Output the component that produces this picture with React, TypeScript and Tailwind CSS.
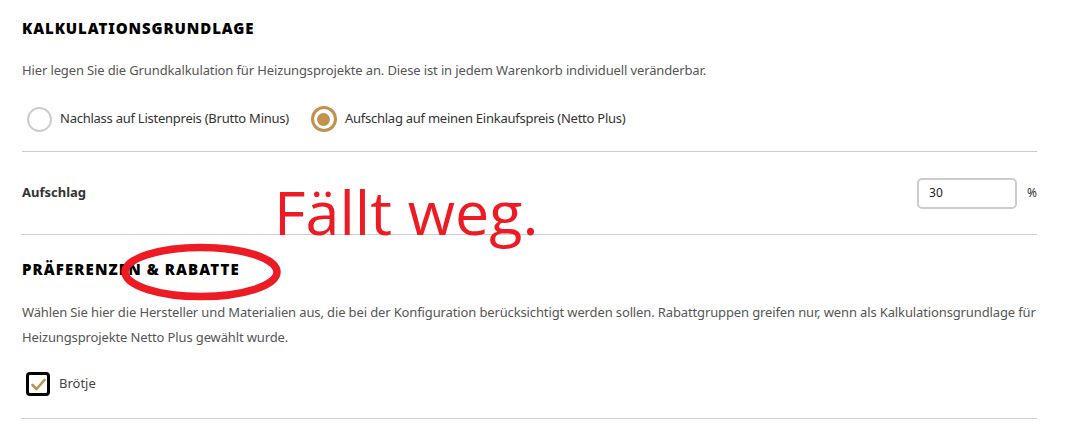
import React from "react";

const font = { fontFamily: '"Noto Sans", "Liberation Sans", sans-serif' };

function Radio({ checked, label }: { checked?: boolean; label: string }) {
  return (
    <label className="flex items-center gap-[8px] cursor-pointer">
      {checked ? (
        <span className="flex h-[26px] w-[26px] items-center justify-center rounded-full border-[3px] border-[#c0914f]">
          <span className="h-[13px] w-[13px] rounded-full bg-[#c0914f]" />
        </span>
      ) : (
        <span className="h-[25px] w-[25px] rounded-full border-2 border-[#cccccc]" />
      )}
      <span className="text-[13px] tracking-[-0.25px] text-[#333]">{label}</span>
    </label>
  );
}

export default function App() {
  return (
    <div className="relative min-h-[439px] bg-white text-[#444]" style={font}>
      <div className="w-[1015px] ml-[22px]">
        {/* Kalkulationsgrundlage */}
        <section className="pt-[18px]">
          <h2 className="text-[15px] font-black tracking-[0.9px] text-black leading-[20px]">
            KALKULATIONSGRUNDLAGE
          </h2>
          <p className="mt-[22px] text-[13px] leading-[20px] tracking-[-0.13px] text-[#555]">
            Hier legen Sie die Grundkalkulation für Heizungsprojekte an. Diese ist in jedem Warenkorb individuell veränderbar.
          </p>
          <div className="mt-[26px] flex items-center gap-[22px] pl-[5px]">
            <Radio label="Nachlass auf Listenpreis (Brutto Minus)" />
            <Radio checked label="Aufschlag auf meinen Einkaufspreis (Netto Plus)" />
          </div>
        </section>

        <div className="mt-[19px] h-px bg-[#cccccc]" />

        {/* Aufschlag */}
        <div className="flex h-[82px] items-center justify-between">
          <span className="text-[13px] font-bold text-[#333]">Aufschlag</span>
          <div className="flex items-center gap-[10px]">
            <div className="flex h-[31px] w-[100px] items-center rounded-[5px] border-2 border-[#cccccc] px-[10px] text-[12px] text-[#222]">
              30
            </div>
            <span className="text-[12px] text-[#333]">%</span>
          </div>
        </div>

        <div className="h-px bg-[#cccccc]" />

        {/* Präferenzen & Rabatte */}
        <section className="pt-[24px]">
          <h2 className="text-[15px] font-black tracking-[1.1px] text-black leading-[20px]">
            PRÄFERENZEN &amp; RABATTE
          </h2>
          <p className="mt-[21px] text-[13px] leading-[25px] tracking-[-0.13px] text-[#555]">
            Wählen Sie hier die Hersteller und Materialien aus, die bei der Konfiguration berücksichtigt werden sollen. Rabattgruppen greifen nur, wenn als Kalkulationsgrundlage für Heizungsprojekte Netto Plus gewählt wurde.
          </p>
          <label className="mt-[22px] flex items-center gap-[9px] pl-[4px]">
            <span className="flex h-[24px] w-[24px] items-center justify-center rounded-[4px] border-[3px] border-black">
              <svg width="15" height="13" viewBox="0 0 15 13" fill="none">
                <path d="M1.5 7 L5.5 11 L13.5 2" stroke="#c0914f" strokeWidth="2.6" strokeLinecap="round" strokeLinejoin="round" />
              </svg>
            </span>
            <span className="text-[13px] text-[#444]">Brötje</span>
          </label>
        </section>

        <div className="mt-[22px] h-px bg-[#cccccc]" />
      </div>

      {/* Annotations */}
      <div
        className="absolute left-[274px] top-[181px] text-[61px] leading-none text-[#ed1c24]"
        style={{ fontFamily: '"Open Sans", "Noto Sans", sans-serif' }}
      >
        Fällt weg.
      </div>
      <svg className="absolute left-[119px] top-[242px]" width="164" height="60" viewBox="0 0 164 60">
        <ellipse cx="82" cy="30" rx="76" ry="24.5" fill="none" stroke="#ed1c24" strokeWidth="7.5" />
      </svg>
    </div>
  );
}
